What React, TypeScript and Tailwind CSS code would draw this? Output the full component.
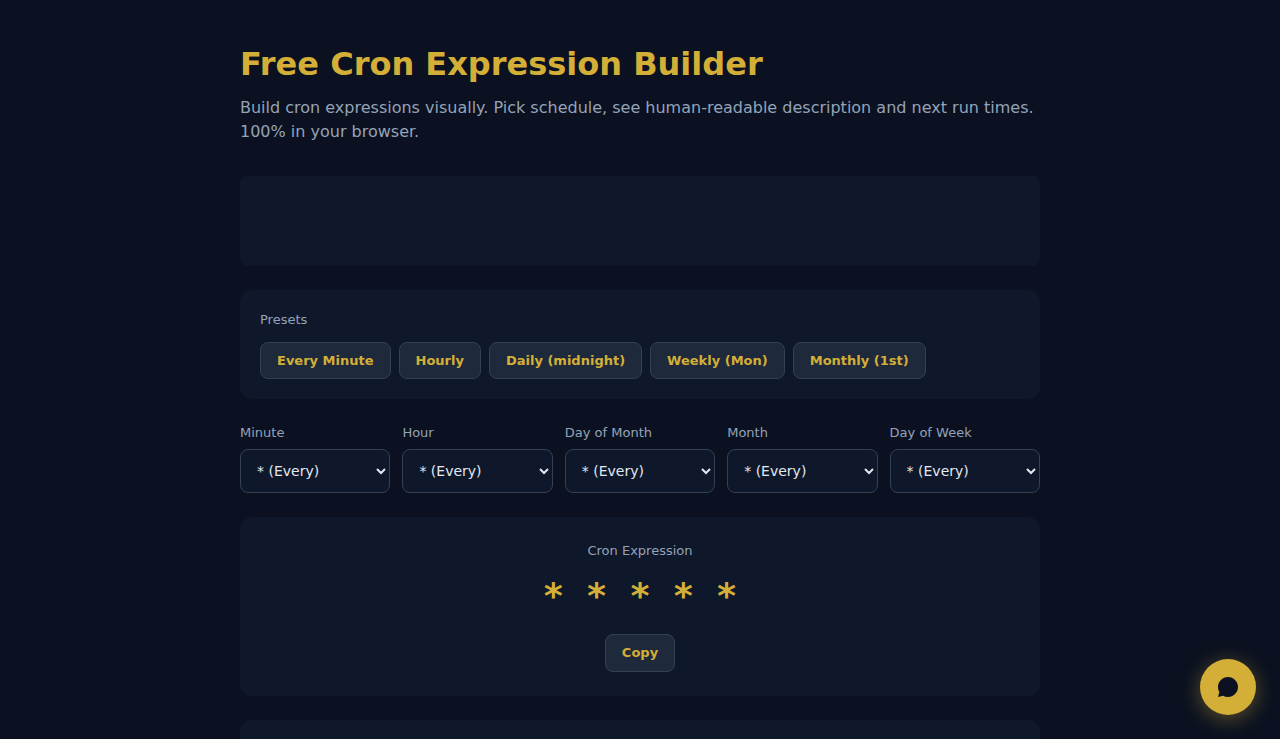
import { useState } from 'react';

const presets = [
  { label: 'Every Minute', value: ['*', '*', '*', '*', '*'] },
  { label: 'Hourly', value: ['0', '*', '*', '*', '*'] },
  { label: 'Daily (midnight)', value: ['0', '0', '*', '*', '*'] },
  { label: 'Weekly (Mon)', value: ['0', '0', '*', '*', '1'] },
  { label: 'Monthly (1st)', value: ['0', '0', '1', '*', '*'] },
];

const fields = [
  { id: 'minute', label: 'Minute', from: 0, to: 59 },
  { id: 'hour', label: 'Hour', from: 0, to: 23 },
  { id: 'dom', label: 'Day of Month', from: 1, to: 31 },
  { id: 'month', label: 'Month', from: 1, to: 12 },
  { id: 'dow', label: 'Day of Week', from: 0, to: 6 },
];

function range(from: number, to: number) {
  return Array.from({ length: to - from + 1 }, (_, i) => String(from + i));
}

const buttonClass =
  'rounded-lg border border-[#334155] bg-[#1e293b] px-4 py-2 text-[13px] font-semibold text-[#d4af37] cursor-pointer';

export default function App() {
  const [cron, setCron] = useState(['*', '*', '*', '*', '*']);

  const update = (index: number, value: string) => {
    setCron(cron.map((part, i) => (i === index ? value : part)));
  };

  return (
    <div className="min-h-screen bg-[#0b1120] font-['DejaVu_Sans',sans-serif] text-[#e2e8f0]">
      <main className="mx-auto max-w-[848px] px-6 pt-10 pb-10">
        <h1 className="mb-2 text-[32px] leading-[48px] font-bold text-[#d4af37]">
          Free Cron Expression Builder
        </h1>
        <p className="mb-8 text-base text-[#94a3b8]">
          Build cron expressions visually. Pick schedule, see human-readable description and next
          run times. 100% in your browser.
        </p>

        {/* Banner slot */}
        <div className="mb-6 h-[90px] rounded-lg bg-[#0f172a]" />

        <section className="mb-6 rounded-xl bg-[#0f172a] p-5">
          <h2 className="mb-3 text-[13px] leading-5 text-[#94a3b8]">Presets</h2>
          <div className="flex flex-wrap gap-2">
            {presets.map(({ label, value }) => (
              <button
                key={label}
                type="button"
                className={`${buttonClass} leading-[19px]`}
                onClick={() => setCron(value)}
              >
                {label}
              </button>
            ))}
          </div>
        </section>

        <div className="mb-6 grid grid-cols-5 gap-3">
          {fields.map(({ id, label, from, to }, i) => (
            <div key={id}>
              <label htmlFor={id} className="mb-1.5 block text-[13px] leading-5 text-[#94a3b8]">
                {label}
              </label>
              <select
                id={id}
                value={cron[i]}
                onChange={(e) => update(i, e.target.value)}
                className="h-11 w-full rounded-lg border border-[#334155] bg-[#0f172a] px-3 text-sm text-[#e2e8f0]"
              >
                <option value="*">* (Every)</option>
                {range(from, to).map((n) => (
                  <option key={n} value={n}>{n}</option>
                ))}
              </select>
            </div>
          ))}
        </div>

        <section className="mb-6 rounded-xl bg-[#0f172a] p-6 text-center">
          <h2 className="mb-2 text-[13px] leading-5 text-[#94a3b8]">Cron Expression</h2>
          <div className="mb-3 font-['DejaVu_Sans_Mono',monospace] text-4xl leading-[53px] font-bold text-[#d4af37]">
            {cron.join(' ')}
          </div>
          <button
            type="button"
            className={`${buttonClass} leading-5`}
            onClick={() => navigator.clipboard?.writeText(cron.join(' '))}
          >
            Copy
          </button>
        </section>

        {/* Next run times */}
        <section className="min-h-40 rounded-xl bg-[#0f172a] p-6" />
      </main>

      <button
        type="button"
        aria-label="Open chat"
        className="fixed right-6 bottom-6 flex size-14 cursor-pointer items-center justify-center rounded-full bg-[#d4af37] shadow-[0_4px_20px_rgba(212,175,55,0.4)]"
      >
        <svg viewBox="0 0 24 24" className="size-6 fill-[#0b1120]" aria-hidden="true">
          <path d="M12 2C6.48 2 2 6.48 2 12c0 1.82.49 3.53 1.34 5L2 22l5-1.34A9.96 9.96 0 0 0 12 22c5.52 0 10-4.48 10-10S17.52 2 12 2z" />
        </svg>
      </button>
    </div>
  );
}
